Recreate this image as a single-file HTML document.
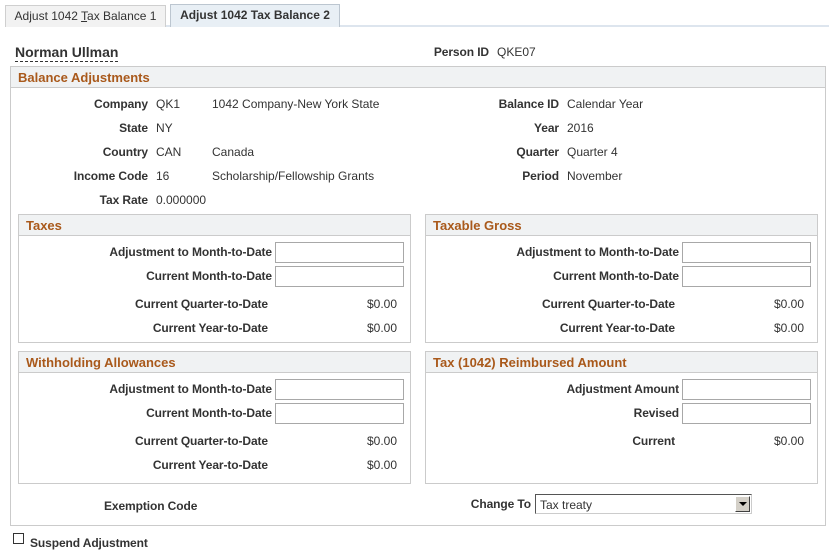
<!DOCTYPE html>
<html><head><style>
body{margin:0;width:835px;height:554px;background:#fff;font-family:"Liberation Sans",Arial,sans-serif;font-size:12px;color:#333;position:relative;overflow:hidden}
div{position:absolute;box-sizing:border-box}
.l{font-weight:bold;text-align:right;white-space:nowrap;height:14px;line-height:14px;margin-top:1px;letter-spacing:-0.1px}
.v{white-space:nowrap;height:14px;line-height:14px;margin-top:1px}
.box{border:1px solid #cbcbcb}
.hd{left:0;right:0;top:0;height:21px;background:#f0f2f3;border-bottom:1px solid #cbcbcb;color:#a9591b;font-weight:bold;font-size:13px;line-height:22px;padding-left:7px}
.in{border:1px solid #a8a8a8;background:#fff;height:21px;width:129px}
.tab{border:1px solid #cfcfcf;border-bottom:none;background:#f2f2f2;height:22px;line-height:21px;text-align:center;font-size:12px}
</style></head><body>
<div style="left:5px;top:25px;width:824px;height:2px;background:#dde5ee"></div>
<div class="tab" style="left:5px;top:5px;width:161px;color:#333">Adjust 1042 <u>T</u>ax Balance 1</div>
<div class="tab" style="left:170px;top:4px;width:170px;height:23px;background:#e8eff5;border-color:#bcc6d0;font-weight:bold;color:#333">Adjust 1042 Tax Balance 2</div>

<div style="left:15px;top:44px;font-size:14px;font-weight:bold;line-height:16px;border-bottom:1px dashed #333;padding-bottom:1px">Norman Ullman</div>
<div class="l" style="right:346px;top:44px">Person ID</div>
<div class="v" style="left:497px;top:44px">QKE07</div>

<div class="box" style="left:10px;top:66px;width:816px;height:460px">
<div class="hd">Balance Adjustments</div>
</div>

<div class="l" style="right:687px;top:96px">Company</div><div class="v" style="left:156px;top:96px">QK1</div><div class="v" style="left:212px;top:96px">1042 Company-New York State</div>
<div class="l" style="right:687px;top:120px">State</div><div class="v" style="left:156px;top:120px">NY</div>
<div class="l" style="right:687px;top:144px">Country</div><div class="v" style="left:156px;top:144px">CAN</div><div class="v" style="left:212px;top:144px">Canada</div>
<div class="l" style="right:687px;top:168px">Income Code</div><div class="v" style="left:156px;top:168px">16</div><div class="v" style="left:212px;top:168px">Scholarship/Fellowship Grants</div>
<div class="l" style="right:687px;top:192px">Tax Rate</div><div class="v" style="left:156px;top:192px">0.000000</div>

<div class="l" style="right:276px;top:96px">Balance ID</div><div class="v" style="left:567px;top:96px">Calendar Year</div>
<div class="l" style="right:276px;top:120px">Year</div><div class="v" style="left:567px;top:120px">2016</div>
<div class="l" style="right:276px;top:144px">Quarter</div><div class="v" style="left:567px;top:144px">Quarter 4</div>
<div class="l" style="right:276px;top:168px">Period</div><div class="v" style="left:567px;top:168px">November</div>

<div class="box" style="left:18px;top:214px;width:393px;height:129px"><div class="hd">Taxes</div></div>
<div class="l" style="right:563px;top:244px">Adjustment to Month-to-Date</div><div class="in" style="left:275px;top:242px"></div>
<div class="l" style="right:563px;top:268px">Current Month-to-Date</div><div class="in" style="left:275px;top:266px"></div>
<div class="l" style="right:567px;top:296px">Current Quarter-to-Date</div><div class="v" style="right:438px;top:296px">$0.00</div>
<div class="l" style="right:567px;top:320px">Current Year-to-Date</div><div class="v" style="right:438px;top:320px">$0.00</div>

<div class="box" style="left:425px;top:214px;width:393px;height:129px"><div class="hd">Taxable Gross</div></div>
<div class="l" style="right:156px;top:244px">Adjustment to Month-to-Date</div><div class="in" style="left:682px;top:242px"></div>
<div class="l" style="right:156px;top:268px">Current Month-to-Date</div><div class="in" style="left:682px;top:266px"></div>
<div class="l" style="right:160px;top:296px">Current Quarter-to-Date</div><div class="v" style="right:31px;top:296px">$0.00</div>
<div class="l" style="right:160px;top:320px">Current Year-to-Date</div><div class="v" style="right:31px;top:320px">$0.00</div>

<div class="box" style="left:18px;top:351px;width:393px;height:133px"><div class="hd">Withholding Allowances</div></div>
<div class="l" style="right:563px;top:381px">Adjustment to Month-to-Date</div><div class="in" style="left:275px;top:379px"></div>
<div class="l" style="right:563px;top:405px">Current Month-to-Date</div><div class="in" style="left:275px;top:403px"></div>
<div class="l" style="right:567px;top:433px">Current Quarter-to-Date</div><div class="v" style="right:438px;top:433px">$0.00</div>
<div class="l" style="right:567px;top:457px">Current Year-to-Date</div><div class="v" style="right:438px;top:457px">$0.00</div>

<div class="box" style="left:425px;top:351px;width:393px;height:133px"><div class="hd">Tax (1042) Reimbursed Amount</div></div>
<div class="l" style="right:156px;top:381px">Adjustment Amount</div><div class="in" style="left:682px;top:379px"></div>
<div class="l" style="right:156px;top:405px">Revised</div><div class="in" style="left:682px;top:403px"></div>
<div class="l" style="right:160px;top:433px">Current</div><div class="v" style="right:31px;top:433px">$0.00</div>

<div class="l" style="left:104px;top:498px;text-align:left">Exemption Code</div>
<div class="l" style="right:304px;top:496px">Change To</div>
<div style="left:535px;top:494px;width:217px;height:20px;border:1px solid;border-color:#555 #ccc #ccc #555;background:#fff">
<div class="v" style="left:4px;top:2px">Tax treaty</div>
<div style="right:1px;top:1px;width:15px;height:16px;background:#d4d0c8;border:1px solid;border-color:#fff #404040 #404040 #fff"><div style="left:3px;top:5px;width:0;height:0;border-left:4px solid transparent;border-right:4px solid transparent;border-top:4px solid #000"></div></div>
</div>

<div style="left:13px;top:533px;width:11px;height:11px;border:1px solid #333;background:#fff"></div>
<div class="l" style="left:30px;top:535px;text-align:left">Suspend Adjustment</div>
</body></html>
